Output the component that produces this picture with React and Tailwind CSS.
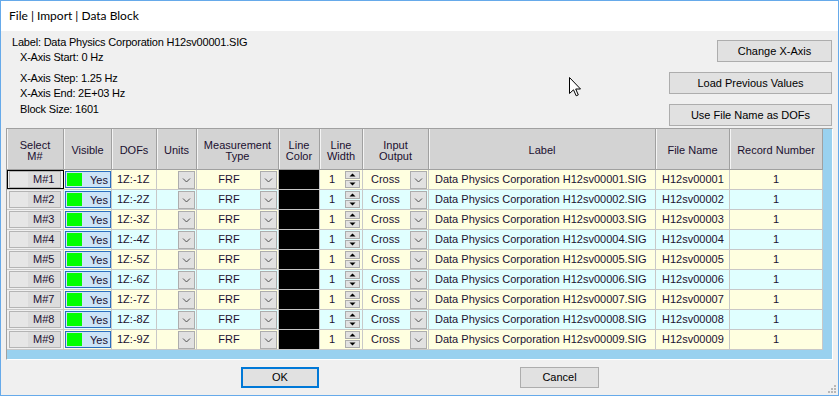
import React from "react";

const cols = [57, 48, 45, 40, 82, 41, 43, 66, 227, 74, 93];

function Chevron() {
  return (
    <svg width="9" height="6" viewBox="0 0 9 6" className="block">
      <path d="M1 1.5 L4.5 5 L8 1.5" fill="none" stroke="#505050" strokeWidth="1" />
    </svg>
  );
}

function DropBtn() {
  return (
    <div className="w-[17px] h-[18px] border border-[#adadad] bg-[#e1e1e1] flex items-center justify-center">
      <Chevron />
    </div>
  );
}

function Spinner() {
  return (
    <div className="w-[15px] h-[17px] flex flex-col gap-[1px]">
      <div className="h-[8px] border border-[#adadad] bg-[#e1e1e1] flex items-center justify-center">
        <svg width="7" height="4" viewBox="0 0 7 4" className="block">
          <path d="M0.5 3.5 L3.5 0.5 L6.5 3.5 Z" fill="#000" />
        </svg>
      </div>
      <div className="h-[8px] border border-[#adadad] bg-[#e1e1e1] flex items-center justify-center">
        <svg width="7" height="4" viewBox="0 0 7 4" className="block">
          <path d="M0.5 0.5 L3.5 3.5 L6.5 0.5 Z" fill="#000" />
        </svg>
      </div>
    </div>
  );
}

function HeaderCell({ w, children }) {
  return (
    <div
      style={{ width: w }}
      className="shrink-0 h-full border-r border-[#a0a0a0] shadow-[inset_1px_0_0_#f4f4f4] flex items-center justify-center text-center leading-[11px] pt-[3px] text-[#1b1030]"
    >
      {children}
    </div>
  );
}

function Row({ n }) {
  const bg = n % 2 === 1 ? "bg-[#ffffe0]" : "bg-[#e0ffff]";
  const id = String(n).padStart(5, "0");
  const cell = "shrink-0 h-full border-r border-[#c8c8c8] flex items-center";
  return (
    <div className={`flex h-[20px] border-b border-[#c8c8c8] ${bg} text-[#1b1030]`}>
      <div
        style={{ width: cols[0] }}
        className={`${cell} bg-[#f0f0f0] px-[2px] ${n === 1 ? "outline outline-1 -outline-offset-1 outline-black" : ""}`}
      >
        <div className="w-[53px] h-[17px] border border-[#b4b4b4] flex">
          <div className="w-[18px] h-full bg-[#e6e6e6]" />
          <div className="flex-1 h-full bg-[#dcdcdc] flex items-center pl-[5px]">M#{n}</div>
        </div>
      </div>
      <div style={{ width: cols[1] }} className={`${cell} pl-[1px]`}>
        <div className="w-[46px] h-[17px] border border-[#2a6fbf] bg-[#cce4f7] flex items-end p-[1px]">
          <div className="w-[15px] h-full bg-[#00ff00]" />
          <div className="flex-1 text-right pr-[1px] leading-[11px]">Yes</div>
        </div>
      </div>
      <div style={{ width: cols[2] }} className={`${cell} pl-[5px]`}>1Z:-{n}Z</div>
      <div style={{ width: cols[3] }} className={`${cell} justify-end pr-[1px]`}>
        <DropBtn />
      </div>
      <div style={{ width: cols[4] }} className={`${cell} pr-[1px]`}>
        <div className="flex-1 text-center pl-[1px]">FRF</div>
        <DropBtn />
      </div>
      <div style={{ width: cols[5] }} className={`${cell} bg-black`} />
      <div style={{ width: cols[6] }} className={`${cell} pr-[2px]`}>
        <div className="flex-1 pl-[9px]">1</div>
        <Spinner />
      </div>
      <div style={{ width: cols[7] }} className={`${cell} pr-[1px]`}>
        <div className="flex-1 pl-[8px]">Cross</div>
        <DropBtn />
      </div>
      <div style={{ width: cols[8] }} className={`${cell} pl-[6px]`}>
        Data Physics Corporation H12sv{id}.SIG
      </div>
      <div style={{ width: cols[9] }} className={`${cell} pl-[6px]`}>H12sv{id}</div>
      <div style={{ width: cols[10] }} className={`${cell} justify-center`}>1</div>
    </div>
  );
}

export default function App() {
  return (
    <div className="w-[839px] h-[396px] border border-[#66aaea] bg-[#f0f0f0] flex flex-col relative overflow-hidden font-['Liberation_Sans',Arial,sans-serif] text-[11px] text-black">
      <div className="h-[30px] bg-white flex items-center pl-[8px] pb-[1px] font-['Lato',sans-serif] text-[12px] text-black">
        File | Import | Data Block
      </div>

      <div className="h-[97px] flex justify-between">
        <div className="pl-[11px] pt-[5px] leading-[13px] tracking-[-0.2px]">
          <div>Label: Data Physics Corporation H12sv00001.SIG</div>
          <div className="pl-[8px] mt-[2px]">X-Axis Start: 0 Hz</div>
          <div className="pl-[8px] mt-[8px]">X-Axis Step: 1.25 Hz</div>
          <div className="pl-[8px] mt-[2px]">X-Axis End: 2E+03 Hz</div>
          <div className="pl-[8px] mt-[3px]">Block Size: 1601</div>
        </div>
        <div className="pr-[6px] pt-[9px] flex flex-col items-end gap-[10px]">
          <div className="w-[115px] h-[22px] border border-[#adadad] bg-[#e1e1e1] flex items-center justify-center">
            Change X-Axis
          </div>
          <div className="w-[163px] h-[22px] border border-[#adadad] bg-[#e1e1e1] flex items-center justify-center">
            Load Previous Values
          </div>
          <div className="w-[163px] h-[22px] border border-[#adadad] bg-[#e1e1e1] flex items-center justify-center">
            Use File Name as DOFs
          </div>
        </div>
      </div>

      <div className="mx-[5px] h-[232px] border-t border-l border-[#a0a0a0] border-r border-b border-r-white border-b-white bg-[#99d1ef] flex flex-col">
        <div className="flex h-[41px] border-b border-[#a0a0a0] bg-[#d3d3d3] w-[816px]">
          <HeaderCell w={cols[0]}>Select<br />M#</HeaderCell>
          <HeaderCell w={cols[1]}>Visible</HeaderCell>
          <HeaderCell w={cols[2]}>DOFs</HeaderCell>
          <HeaderCell w={cols[3]}>Units</HeaderCell>
          <HeaderCell w={cols[4]}>Measurement<br />Type</HeaderCell>
          <HeaderCell w={cols[5]}>Line<br />Color</HeaderCell>
          <HeaderCell w={cols[6]}>Line<br />Width</HeaderCell>
          <HeaderCell w={cols[7]}>Input<br />Output</HeaderCell>
          <HeaderCell w={cols[8]}>Label</HeaderCell>
          <HeaderCell w={cols[9]}>File Name</HeaderCell>
          <HeaderCell w={cols[10]}>Record Number</HeaderCell>
        </div>
        <div className="w-[816px]">
          {[1, 2, 3, 4, 5, 6, 7, 8, 9].map((n) => (
            <Row key={n} n={n} />
          ))}
        </div>
      </div>

      <div className="flex pt-[7px] pl-[240px] gap-[201px]">
        <div className="w-[78px] h-[21px] border-2 border-[#0078d7] bg-[#e1e1e1] flex items-center justify-center">
          OK
        </div>
        <div className="w-[79px] h-[21px] border border-[#adadad] bg-[#e1e1e1] flex items-center justify-center">
          Cancel
        </div>
      </div>

      <svg width="12" height="20" viewBox="0 0 12 20" className="absolute left-[568px] top-[76px]">
        <path d="M0.5 0.5 L0.5 16.5 L4.5 12.8 L7.2 18.8 L9.3 17.9 L6.7 12 L11.5 12 Z" fill="#fff" stroke="#000" strokeWidth="1" strokeLinejoin="miter" />
      </svg>

      <svg width="9" height="9" viewBox="0 0 9 9" className="absolute right-[1px] bottom-[1px]">
        <rect x="6" y="0" width="2" height="2" fill="#b8b8b8" />
        <rect x="3" y="3" width="2" height="2" fill="#b8b8b8" />
        <rect x="6" y="3" width="2" height="2" fill="#b8b8b8" />
        <rect x="0" y="6" width="2" height="2" fill="#b8b8b8" />
        <rect x="3" y="6" width="2" height="2" fill="#b8b8b8" />
        <rect x="6" y="6" width="2" height="2" fill="#b8b8b8" />
      </svg>
    </div>
  );
}
